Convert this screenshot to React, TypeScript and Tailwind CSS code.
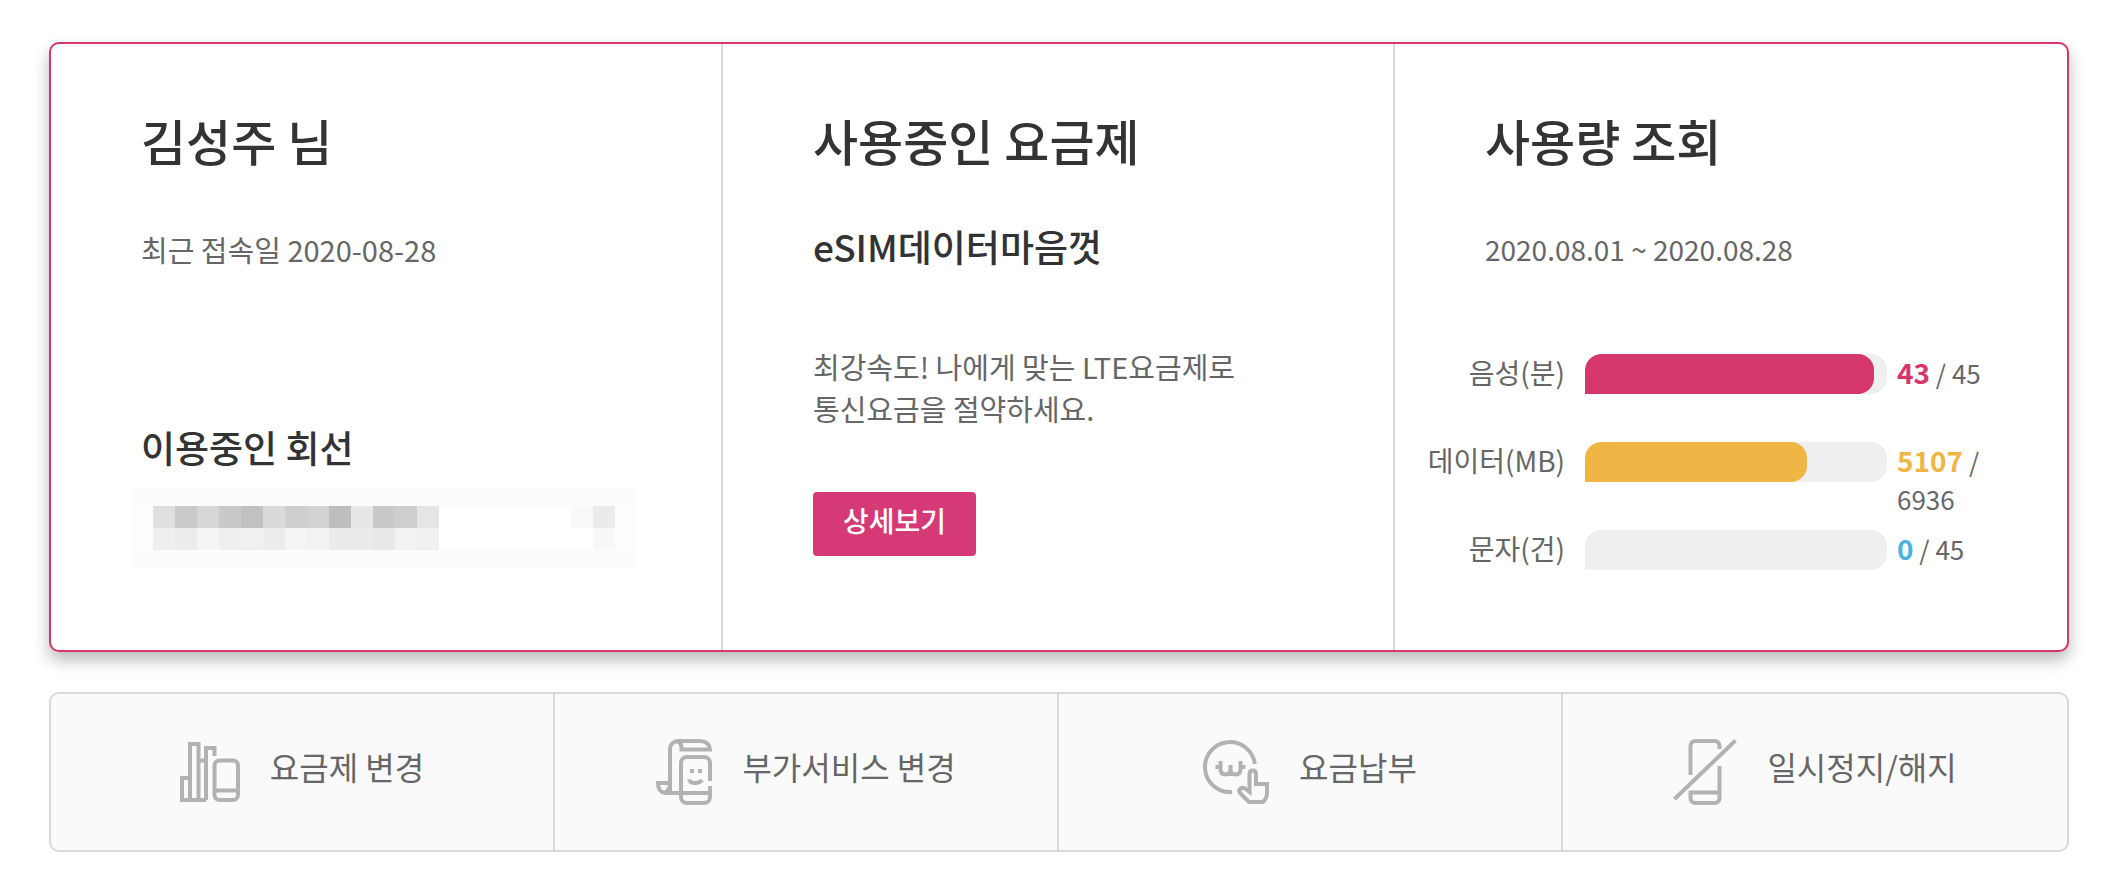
import type { ReactNode } from 'react'

const usages = [
  { label: '음성(분)', used: 43, total: 45, bar: 'bg-[#d5366b]', text: 'text-[#d5366b]' },
  { label: '데이터(MB)', used: 5107, total: 6936, bar: 'bg-[#efb646]', text: 'text-[#efb646]' },
  { label: '문자(건)', used: 0, total: 45, bar: 'bg-[#4bb1df]', text: 'text-[#4bb1df]' },
]

const maskTop = ['#dfdfdf', '#cacaca', '#d7d7d7', '#c9c9c9', '#c1c1c1', '#dadada', '#cfcfcf', '#d3d3d3', '#bebebe', '#e7e7e7', '#c9c9c9', '#cecece', '#e5e5e5']
const maskBottom = ['#efefef', '#ededed', '#f5f5f5', '#efefef', '#f0f0f0', '#ededed', '#f5f5f5', '#f3f3f3', '#ebebeb', '#ebebeb', '#e8e8e8', '#f2f2f2', '#f0f0f0']

// phone number is hidden behind a mosaic
function MaskedNumber() {
  return (
    <svg
      viewBox="0 0 506 81"
      className="mt-3.5 -ml-2.5 w-[506px] max-w-none"
      shapeRendering="crispEdges"
      role="img"
      aria-label="가려진 전화번호"
    >
      <rect width="506" height="81" fill="#fcfcfc" />
      <rect x="0" y="18" width="506" height="44" fill="#fdfdfd" />
      <rect x="22" y="18" width="462" height="44" fill="#fff" />
      {maskTop.map((fill, i) => (
        <rect key={i} x={22 + i * 22} y="18" width="22" height="22" fill={fill} />
      ))}
      {maskBottom.map((fill, i) => (
        <rect key={i} x={22 + i * 22} y="40" width="22" height="22" fill={fill} />
      ))}
      <rect x="440" y="18" width="22" height="22" fill="#f9f9f9" />
      <rect x="462" y="18" width="22" height="22" fill="#ebebeb" />
      <rect x="462" y="40" width="22" height="22" fill="#f8f8f8" />
    </svg>
  )
}

function Icon({ width, height, children }: { width: number; height: number; children: ReactNode }) {
  return (
    <svg
      width={width}
      height={height}
      viewBox={`0 0 ${width} ${height}`}
      fill="none"
      stroke="#b2b2b2"
      strokeWidth="4"
      className="shrink-0"
      aria-hidden="true"
    >
      {children}
    </svg>
  )
}

const menus = [
  {
    name: '요금제 변경',
    icon: (
      <Icon width={60} height={60}>
        <path d="M10 36H2v22h24M10 58V2h8.500v56M18.500 18.500H26M26 58V6h8.500v8" />
        <rect x="34.500" y="18.500" width="23.500" height="39.500" rx="5" />
        <path d="M34.500 48.500H58" />
      </Icon>
    ),
  },
  {
    name: '부가서비스 변경',
    icon: (
      <Icon width={56} height={66}>
        <path d="M14 54V10a8 8 0 0 1 8-8h22q9 0 10 8.500H25.500Q26 3 20 2" />
        <path d="M14 44H2q0 9 7 10h45M14 44q0 8-6 10" />
        <path d="M54 42V24a6 6 0 0 0-6-6H31a6 6 0 0 0-6 6v34a6 6 0 0 0 6 6h17a6 6 0 0 0 6-6V47" />
        <path d="M34 32h4M42 32h4M33 40.500q1 3.500 6 3.500t7-3" />
      </Icon>
    ),
  },
  {
    name: '요금납부',
    icon: (
      <Icon width={66} height={64}>
        <path d="M29 52A25 25 0 1 1 51.800 24" />
        <path d="M17.500 21v8q0 5.500 5 5.500t5-5.500v-4v4q0 5.500 5 5.500t5-5.500v-8M12.500 27h5M37.500 27h5" />
        <path d="M46.500 52V34q0-3.500 3.200-3.500T53 34v10h11v9q0 5-4 9H46l-8-8q-3-3-1-5t5-.5z" />
      </Icon>
    ),
  },
  {
    name: '일시정지/해지',
    icon: (
      <Icon width={64} height={66}>
        <path d="M17.500 36V7a5 5 0 0 1 5-5h19a5 5 0 0 1 5 5v3M46.500 27v32a5 5 0 0 1-5 5h-19a5 5 0 0 1-5-5v-5.500h29" />
        <path d="M1.500 60l61-58.500" />
      </Icon>
    ),
  },
]

export default function App() {
  return (
    <main className="bg-white pt-[42px] pr-[53px] pb-8 pl-[49px] font-['Noto_Sans_CJK_KR',sans-serif] text-[28px] leading-[42px] text-[#666]">
      <div className="grid grid-cols-3 divide-x-2 divide-[#d9d9d9] rounded-[10px] border-2 border-[#d5366b] bg-white shadow-[0_8px_16px_rgba(0,0,0,0.28)]">
        <section className="px-[90px] pt-[66px]">
          <h2 className="text-[49px] leading-[60px] font-medium text-[#333]">김성주 님</h2>
          <p className="mt-[58px] text-[29px]">최근 접속일 2020-08-28</p>
          <h3 className="mt-[150px] text-[37px] leading-[54px] font-medium text-[#333]">이용중인 회선</h3>
          <MaskedNumber />
        </section>

        <section className="px-[90px] pt-[66px]">
          <h2 className="text-[49px] leading-[60px] font-medium text-[#333]">사용중인 요금제</h2>
          <h3 className="mt-[49px] text-[37px] leading-[54px] font-medium text-[#333]">eSIM데이터마음껏</h3>
          <p className="mt-[72px] text-[29px]">
            최강속도! 나에게 맞는 LTE요금제로
            <br />
            통신요금을 절약하세요.
          </p>
          <button type="button" className="mt-[63px] rounded bg-[#d63a76] px-[30px] pt-[7px] pb-[15px] font-medium text-white">
            상세보기
          </button>
        </section>

        <section className="pt-[66px] pr-[70px] pb-8">
          <div className="pl-[90px]">
            <h2 className="text-[49px] leading-[60px] font-medium text-[#333]">사용량 조회</h2>
            <p className="mt-[58px]">2020.08.01 ~ 2020.08.28</p>
          </div>
          <ul className="mt-[84px]">
            {usages.map((item) => (
              <li key={item.label} className="flex min-h-[88px] items-start">
                <span className="mr-5 w-[170px] shrink-0 text-right leading-9">{item.label}</span>
                <div className="h-10 flex-1 overflow-hidden rounded-2xl rounded-bl-none bg-[#efefef]">
                  <div
                    className={`h-full rounded-2xl rounded-bl-none ${item.bar}`}
                    style={{ width: `${(item.used / item.total) * 100}%` }}
                  />
                </div>
                <p className="ml-2.5 w-[100px] shrink-0 text-[26px] leading-[38px]">
                  <strong className={`text-[28px] leading-none font-bold ${item.text}`}>{item.used}</strong> / {item.total}
                </p>
              </li>
            ))}
          </ul>
        </section>
      </div>

      <nav className="mt-10 grid grid-cols-4 divide-x-2 divide-[#d9d9d9] rounded-[10px] border-2 border-[#d9d9d9] bg-[#fafafa]">
        {menus.map((menu) => (
          <a key={menu.name} href="#" className="flex h-[156px] items-center justify-center gap-[30px] text-[32px]">
            {menu.icon}
            <span className="pb-3">{menu.name}</span>
          </a>
        ))}
      </nav>
    </main>
  )
}
